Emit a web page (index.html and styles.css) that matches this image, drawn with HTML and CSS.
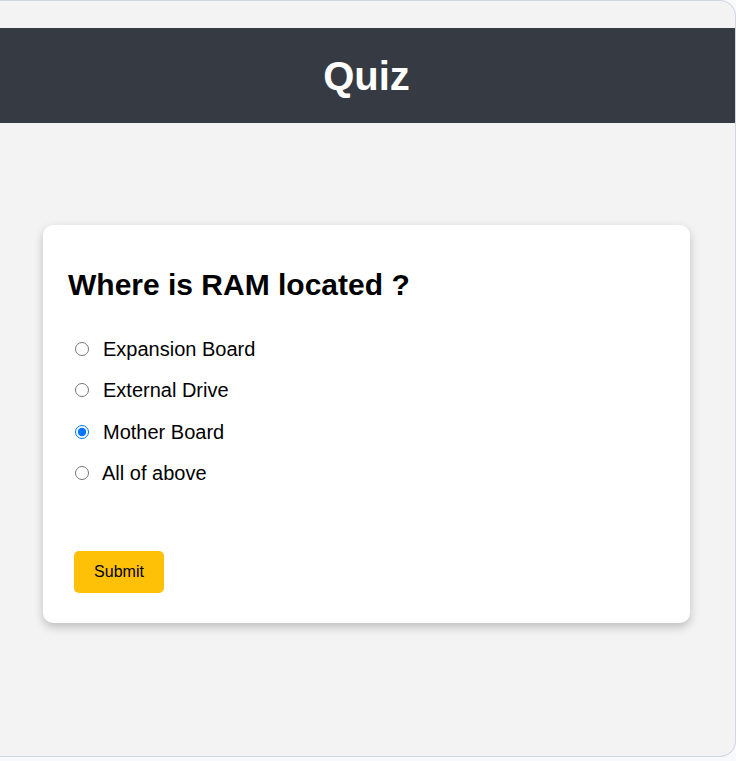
FILE: index.html
```html
<!DOCTYPE html>
<html lang="en">
<head>
<meta charset="utf-8">
<title>Quiz</title>
<link rel="stylesheet" href="styles.css">
</head>
<body>
<div class="frame">
  <header class="header"><h1>Quiz</h1></header>
  <main class="card">
    <h2 class="question">Where is RAM located ?</h2>
    <ul class="options">
      <li><label><input type="radio" name="ans"><span>Expansion Board</span></label></li>
      <li><label><input type="radio" name="ans"><span>External Drive</span></label></li>
      <li><label><input type="radio" name="ans" checked><span>Mother Board</span></label></li>
      <li><label><input type="radio" name="ans"><span class="tight">All of above</span></label></li>
    </ul>
    <button class="submit" type="button">Submit</button>
  </main>
</div>
</body>
</html>
```

FILE: styles.css
```css
html, body {
  margin: 0;
  padding: 0;
  background: #f8f9fc;
  font-family: "Liberation Sans", Arial, sans-serif;
}
.frame {
  box-sizing: border-box;
  width: 736px;
  height: 757px;
  background: #f3f3f3;
  border: 1px solid #cfd7e3;
  border-left: none;
  border-radius: 0 16px 16px 0;
  padding-top: 27px;
  overflow: hidden;
}
.header {
  height: 95px;
  background: #363a42;
  display: flex;
  align-items: center;
  justify-content: center;
}
.header h1 {
  margin: 0 0 0 -2px;
  color: #fff;
  font-size: 40px;
  font-weight: bold;
  line-height: 44px;
}
.card {
  box-sizing: border-box;
  margin: 102px 0 0 43px;
  width: 647px;
  height: 398px;
  background: #fff;
  border-radius: 10px;
  box-shadow: 0 4px 10px rgba(0, 0, 0, 0.22);
  padding: 44px 25px 0 25px;
}
.question {
  margin: 0;
  font-size: 30px;
  line-height: 32px;
  font-weight: bold;
  color: #000;
}
.options {
  list-style: none;
  margin: 37px 0 0 0;
  padding: 0;
  display: flex;
  flex-direction: column;
  gap: 19.4px;
}
.options li {
  font-size: 20px;
  line-height: 22px;
  height: 22px;
  color: #000;
}
.options label {
  display: flex;
  align-items: center;
}
.options input {
  width: 14px;
  height: 14px;
  margin: 0 14px 0 7px;
}
.options .tight {
  margin-left: -1px;
}
.submit {
  margin-top: 67px;
  margin-left: 6px;
  width: 90px;
  height: 42px;
  background: #ffc107;
  border: none;
  border-radius: 5px;
  font-family: "Liberation Sans", Arial, sans-serif;
  font-size: 16px;
  color: #000;
  padding: 0;
}
```
